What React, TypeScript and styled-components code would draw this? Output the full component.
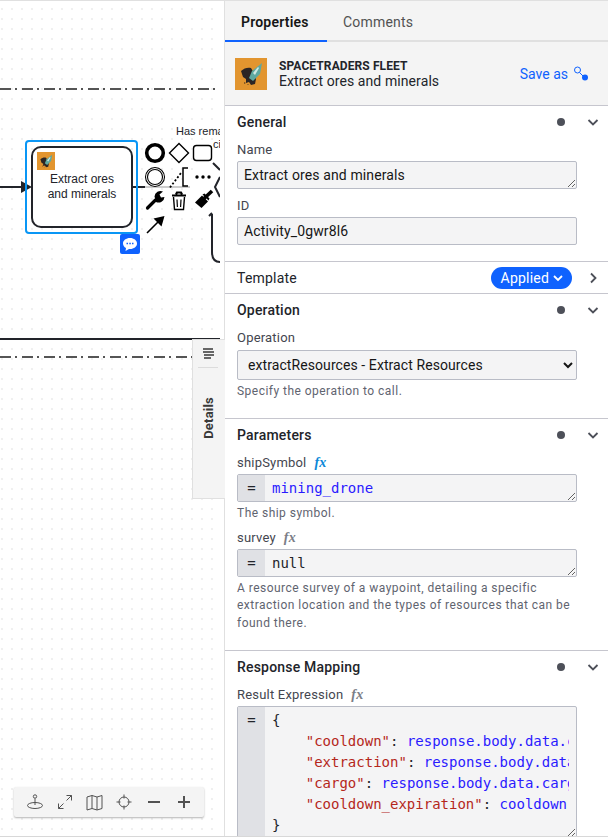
import * as React from 'react';
import styled, { createGlobalStyle } from 'styled-components';

const UI_FONT = '"Roboto", "Noto Sans", sans-serif';
const MONO_FONT = '"DejaVu Sans Mono", monospace';
const DIAGRAM_FONT = '"Liberation Sans", Arial, sans-serif';

const GlobalStyle = createGlobalStyle`
  html, body { margin: 0; padding: 0; height: 100%; background: #fff; overflow: hidden; }
  * { box-sizing: border-box; }
`;

const Workspace = styled.div`
  display: flex;
  height: 837px;
  border-top: 1px solid #e0e0e0;
  border-bottom: 1px solid #d8d8d8;
  font-family: ${UI_FONT};
  overflow: hidden;
`;

// Canvas
const CanvasArea = styled.div`
  position: relative;
  flex: 0 0 225px;
  border-right: 1px solid #e0e0e0;
  background: #fff;
`;

const DottedCanvas = styled.div`
  position: absolute;
  top: 0;
  bottom: 0;
  left: 0;
  width: 220px;
  overflow: hidden;
  background-image: radial-gradient(circle at 50% 50%, #bdbdbd 0.4px, transparent 0.8px);
  background-size: 10px 10px;
  background-position: -3px 3px;
`;

const FlowLayer = styled.svg`
  position: absolute;
  top: 0;
  left: 0;
`;

const SelectionOutline = styled.div`
  position: absolute;
  left: 25px;
  top: 139px;
  width: 113px;
  height: 94px;
  border: 2px solid #0a96f5;
  border-radius: 4px;
`;

const TaskShape = styled.div`
  position: absolute;
  left: 31px;
  top: 145px;
  width: 102px;
  height: 82px;
  padding: 24px 6px 0;
  background: #fff;
  border: 2.5px solid #22242a;
  border-radius: 10px;
  color: #22242a;
  font: 12px/15px ${DIAGRAM_FONT};
  text-align: center;
`;

const TaskIcon = styled.div`
  position: absolute;
  left: 37px;
  top: 151px;
  width: 18px;
  height: 18px;
`;

const CommentBadge = styled.div`
  position: absolute;
  left: 120px;
  top: 233px;
  width: 20px;
  height: 20px;
  display: flex;
  align-items: center;
  justify-content: center;
  background: #0f62fe;
  border-radius: 2px;
`;

const FloatingLabel = styled.div<{ $x: number; $y: number }>`
  position: absolute;
  left: ${(p) => p.$x}px;
  top: ${(p) => p.$y}px;
  color: #22242a;
  font: 11px/13px ${DIAGRAM_FONT};
  white-space: nowrap;
`;

const PadIcon = styled.svg<{ $x: number; $y: number }>`
  position: absolute;
  left: ${(p) => p.$x}px;
  top: ${(p) => p.$y}px;
`;

const DetailsTab = styled.div`
  position: absolute;
  left: 192px;
  top: 338px;
  width: 33px;
  height: 160px;
  display: flex;
  flex-direction: column;
  align-items: center;
  padding: 8px 2px 0 0;
  background: #f4f4f4;
  border: 1px solid #e0e0e0;
  border-right: none;
`;

const DetailsRule = styled.div`
  width: 20px;
  height: 1px;
  margin: 8px 0 29px;
  background: #dcdcdc;
`;

const DetailsLabel = styled.div`
  writing-mode: vertical-rl;
  transform: rotate(180deg);
  color: #393939;
  font-size: 13px;
  font-weight: 700;
  letter-spacing: 0.2px;
`;

const CanvasToolbar = styled.div`
  position: absolute;
  left: 14px;
  top: 786px;
  width: 190px;
  height: 30px;
  display: flex;
  align-items: center;
  padding: 0 6px;
  background: #f4f4f4;
  border-radius: 2px;
  box-shadow: 0 1px 2px rgba(0, 0, 0, 0.3);
`;

const ToolbarButton = styled.div`
  flex: 0 0 29.8px;
  height: 30px;
  display: flex;
  align-items: center;
  justify-content: center;
  color: #525252;
`;

// Properties panel
const Panel = styled.div`
  flex: 1;
  min-width: 0;
  overflow: hidden;
  background: #fff;
`;

const TabBar = styled.div`
  display: flex;
  height: 41px;
  background: #f4f4f4;
`;

const Tab = styled.div<{ $active?: boolean; $filler?: boolean }>`
  flex: ${(p) => (p.$filler ? '1' : '0 0 102px')};
  padding: 13px 0 0 16px;
  border-bottom: 2px solid ${(p) => (p.$active ? '#0f62fe' : '#e0e0e0')};
  color: ${(p) => (p.$active ? '#161616' : '#525252')};
  font-size: 14px;
  font-weight: ${(p) => (p.$active ? 600 : 400)};
  line-height: 16px;
  letter-spacing: 0.2px;
`;

const ElementHeader = styled.div`
  display: flex;
  align-items: center;
  height: 64px;
  padding: 0 19px 0 10px;
  background: #f4f4f4;
  border-bottom: 1px solid #c6c6ce;
`;

const ElementIcon = styled.div`
  width: 32px;
  height: 32px;
  flex: none;
`;

const ElementText = styled.div`
  flex: 1;
  margin-left: 12px;
  color: #22242a;
`;

const ElementType = styled.div`
  font-size: 12px;
  font-weight: 700;
  line-height: 14px;
  letter-spacing: 0.1px;
`;

const ElementName = styled.div`
  padding-top: 1px;
  font-size: 14px;
  line-height: 15px;
  letter-spacing: 0.09px;
`;

const SaveAs = styled.div`
  display: flex;
  align-items: center;
  gap: 5px;
  color: #0f62fe;
  font-size: 14px;
`;

const Group = styled.section<{ $height: number }>`
  height: ${(p) => p.$height}px;
  padding: 0 31px 0 12px;
  border-bottom: 1px solid #c6c6ce;
  overflow: hidden;
`;

const GroupHeader = styled.div`
  display: flex;
  align-items: center;
  height: 32px;
  margin-right: -24px;
`;

const GroupTitle = styled.div<{ $plain?: boolean }>`
  flex: 1;
  color: #22242a;
  font-size: 14px;
  font-weight: ${(p) => (p.$plain ? 400 : 500)};
  letter-spacing: 0.2px;
`;

const StatusDot = styled.span`
  width: 8px;
  height: 8px;
  margin-right: 20px;
  border-radius: 50%;
  background: #4d5059;
`;

const Chevron = styled.svg`
  flex: none;
  color: #4d5059;
`;

const AppliedPill = styled.div`
  display: flex;
  align-items: center;
  gap: 4px;
  height: 22px;
  margin-right: 13px;
  padding: 0 9px 0 10px;
  border-radius: 11px;
  background: #0f62fe;
  color: #fff;
  font-size: 14px;
  letter-spacing: 0.2px;
`;

const Field = styled.div<{ $top: number }>`
  margin-top: ${(p) => p.$top}px;
`;

const FieldLabel = styled.div<{ $raised?: boolean }>`
  display: flex;
  align-items: center;
  gap: 8px;
  height: 18px;
  padding-top: ${(p) => (p.$raised ? 0 : 2)}px;
  margin-bottom: 3px;
  color: #44464f;
  font-size: 13px;
  line-height: 18px;
  letter-spacing: 0.2px;
`;

const FxMark = styled.span<{ $active?: boolean }>`
  color: ${(p) => (p.$active ? '#0b87d8' : '#7b7e87')};
  font: italic 700 14px/14px "Liberation Serif", serif;
`;

const TextBox = styled.div<{ $resizable?: boolean }>`
  width: 340px;
  height: 28px;
  padding: 0 6px;
  overflow: hidden;
  resize: ${(p) => (p.$resizable ? 'vertical' : 'none')};
  background: #f4f4f5;
  border: 1px solid #b9bcc6;
  border-radius: 2px;
  color: #161616;
  font-size: 14px;
  line-height: 26px;
  letter-spacing: 0.12px;
  white-space: nowrap;
`;

const OperationSelect = styled.select`
  display: block;
  width: 340px;
  height: 30px;
  padding: 0 6px;
  background: #f4f4f5;
  border: 1px solid #b9bcc6;
  border-radius: 2px;
  color: #161616;
  font: 14px ${UI_FONT};
  letter-spacing: 0.08px;
`;

const HelpText = styled.div`
  margin-top: 3px;
  color: #5f6470;
  font-size: 12px;
  line-height: 17.5px;
  letter-spacing: 0.47px;
`;

const FeelBox = styled.div<{ $height: number }>`
  display: flex;
  width: 340px;
  height: ${(p) => p.$height}px;
  overflow: hidden;
  resize: vertical;
  background: #f4f4f5;
  border: 1px solid #b9bcc6;
  border-radius: 2px;
`;

const FeelGutter = styled.div`
  flex: 0 0 27px;
  padding-top: 5px;
  background: #e0e1e5;
  color: #22242a;
  font: 14px/17px ${MONO_FONT};
  text-align: center;
`;

const FeelCode = styled.pre`
  flex: 1;
  min-width: 0;
  margin: 0 7px 0 0;
  padding: 3px 0 0 7px;
  overflow: hidden;
  color: #22242a;
  font: 14px/21px ${MONO_FONT};
`;

const FeelValue = styled.span`
  color: #2a1aff;
`;

const FeelString = styled.span`
  color: #b5271b;
`;

const rocket = (size: number) => (
  <svg width={size} height={size} viewBox="0 0 32 32">
    <rect width="32" height="32" fill="#e2952f" />
    <path d="M6 13c3-3 7-4 10-3l3 5 2 6-1 5-4 1-2-3-3 1 0-4-3-2z" fill="#2b2524" />
    <path d="M14 20l3-7 10-8-2 11-7 7z" fill="#5ea8a0" />
    <path d="M18 15l5-6 1 1-4 7z" fill="#cfe8e3" />
    <path d="M9 24l2 1-2 1zM13 26l1 1-2 0z" fill="#6b4a20" />
  </svg>
);

const chevronDown = (
  <Chevron width="16" height="16" viewBox="0 0 16 16">
    <path d="M3.5 6l4.5 4.500L12.500 6" fill="none" stroke="currentColor" strokeWidth="1.800" />
  </Chevron>
);

const chevronRight = (
  <Chevron width="16" height="16" viewBox="0 0 16 16">
    <path d="M6 3.500L10.500 8 6 12.500" fill="none" stroke="currentColor" strokeWidth="1.800" />
  </Chevron>
);

function Canvas() {
  return (
    <CanvasArea>
      <DottedCanvas>
        <FlowLayer width="220" height="837" viewBox="0 0 220 837">
          <path d="M0 88h220M0 356h192" stroke="#555" strokeWidth="2" strokeDasharray="11 4 2 5" />
          <path d="M0 338h220" stroke="#22242a" strokeWidth="2" />
          <path d="M0 186h24" stroke="#22242a" strokeWidth="2" />
          <path d="M21 180l11 6-11 6z" fill="#22242a" />
          <path d="M133 186h12" stroke="#22242a" strokeWidth="2" />
          <path d="M145 186h45" stroke="#999" strokeWidth="1" />
          <path d="M212 205v46q0 10 8 10" fill="none" stroke="#22242a" strokeWidth="2" />
          <path d="M190 178l13-15h10l7 8v36l-7 6h-11l-12-12z" fill="#fff" />
          <path d="M213 162l7 7M220 176l-5 10 5 10M212 212l-3 3" fill="none" stroke="#22242a" strokeWidth="2" />
        </FlowLayer>

        <SelectionOutline />
        <TaskShape>Extract ores and minerals</TaskShape>
        <TaskIcon>{rocket(18)}</TaskIcon>
        <CommentBadge>
          <svg width="16" height="15" viewBox="0 0 16 15">
            <path d="M8 1c4 0 7 2.400 7 5.500S12 12 8 12l-1 0-3.500 2 .5-3C2 10 1 8.400 1 6.500 1 3.400 4 1 8 1z" fill="#fff" />
            <path d="M4.500 6.500h1.500M7.300 6.500h1.500M10 6.500h1.500" stroke="#0f62fe" strokeWidth="1.500" />
          </svg>
        </CommentBadge>

        <FloatingLabel $x={176} $y={124}>Has rema</FloatingLabel>
        <FloatingLabel $x={213} $y={137}>ci</FloatingLabel>

        <PadIcon $x={144} $y={141} width="22" height="22" viewBox="0 0 22 22">
          <circle cx="11" cy="11" r="8.300" fill="#fff" stroke="#000" strokeWidth="3.600" />
        </PadIcon>
        <PadIcon $x={168} $y={141} width="22" height="22" viewBox="0 0 22 22">
          <path d="M11 1.500L20.500 11 11 20.500 1.500 11z" fill="#fff" stroke="#000" strokeWidth="1.400" />
        </PadIcon>
        <PadIcon $x={192} $y={143} width="22" height="19" viewBox="0 0 22 19">
          <rect x="1.500" y="1.500" width="18" height="15" rx="3" fill="#fff" stroke="#000" strokeWidth="1.400" />
        </PadIcon>
        <PadIcon $x={144} $y={165} width="22" height="22" viewBox="0 0 22 22">
          <circle cx="11" cy="11" r="9.500" fill="#fff" stroke="#000" strokeWidth="1.100" />
          <circle cx="11" cy="11" r="7.500" fill="#fff" stroke="#000" strokeWidth="1.100" />
        </PadIcon>
        <PadIcon $x={168} $y={165} width="22" height="22" viewBox="0 0 22 22">
          <path d="M2 21.500L13 7" stroke="#000" strokeWidth="1.800" strokeDasharray="2 2" />
          <path d="M20 2h-5v18h5" fill="none" stroke="#000" strokeWidth="1.500" />
        </PadIcon>
        <PadIcon $x={144} $y={188} width="22" height="22" viewBox="0 0 22 22">
          <path d="M3.500 19l8-8" stroke="#000" strokeWidth="3.200" strokeLinecap="round" />
          <path d="M10.500 7.500a6 6 0 0 1 8.500-5l-3.500 3 1.500 3 3.500-.5a6 6 0 0 1-8.500 5z" fill="#000" />
        </PadIcon>
        <PadIcon $x={170} $y={190} width="18" height="20" viewBox="0 0 18 20">
          <path d="M2 4.500h14M6 3.500l1-2h4l1 2" fill="none" stroke="#000" strokeWidth="2.200" />
          <path d="M3.500 6l1 12.500h9l1-12.500" fill="#fff" stroke="#000" strokeWidth="1.400" />
          <path d="M7 8.500l.4 7.500M11 8.500l-.4 7.500" stroke="#000" strokeWidth="1.200" />
        </PadIcon>
        <PadIcon $x={193} $y={164} width="22" height="22" viewBox="0 0 22 22">
          <circle cx="4" cy="12" r="1.700" fill="#000" />
          <circle cx="10" cy="12" r="1.700" fill="#000" />
          <circle cx="16" cy="12" r="1.700" fill="#000" />
        </PadIcon>
        <PadIcon $x={193} $y={188} width="22" height="22" viewBox="0 0 22 22">
          <path d="M2 13.500L9 6.500l6 6L8.500 19z" fill="#000" />
          <path d="M11 9.500L19 2" stroke="#000" strokeWidth="3.600" />
          <path d="M9.500 5.500l2-1 5 5-1 2z" fill="#000" />
        </PadIcon>
        <PadIcon $x={145} $y={213} width="21" height="21" viewBox="0 0 21 21">
          <path d="M2 19L13.500 7.500" stroke="#000" strokeWidth="1.600" />
          <path d="M19.500 2l-3 10.500-8-8z" fill="#000" />
        </PadIcon>
      </DottedCanvas>

      <DetailsTab>
        <svg width="14" height="11" viewBox="0 0 14 11">
          <path d="M2 1h10M2 4h11M3 7h10M3 10h7" stroke="#393939" strokeWidth="1.600" />
        </svg>
        <DetailsRule />
        <DetailsLabel>Details</DetailsLabel>
      </DetailsTab>

      <CanvasToolbar>
        <ToolbarButton>
          <svg width="18" height="18" viewBox="0 0 18 18" fill="none" stroke="currentColor" strokeWidth="1">
            <circle cx="9" cy="3.500" r="1.700" />
            <path d="M9 5.500v6.500" />
            <ellipse cx="9" cy="12.500" rx="7.500" ry="3" />
          </svg>
        </ToolbarButton>
        <ToolbarButton>
          <svg width="16" height="16" viewBox="0 0 16 16" fill="none" stroke="currentColor" strokeWidth="1">
            <path d="M1.500 14.500L6.500 9.500M1.500 9.500v5h5M14.500 1.500L9.500 6.500M9.500 1.500h5v5" />
          </svg>
        </ToolbarButton>
        <ToolbarButton>
          <svg width="17" height="17" viewBox="0 0 17 17" fill="none" stroke="currentColor" strokeWidth="1">
            <path d="M1 3l5-1.500 5 1.500 5-1.500v13L11 16l-5-1.500L1 16zM6 1.500v13M11 3v13" />
          </svg>
        </ToolbarButton>
        <ToolbarButton>
          <svg width="16" height="16" viewBox="0 0 16 16" fill="none" stroke="currentColor" strokeWidth="1">
            <circle cx="8" cy="8" r="5" />
            <path d="M8 0.500v4M8 11.500v4M0.500 8h4M11.500 8h4" />
          </svg>
        </ToolbarButton>
        <ToolbarButton>
          <svg width="14" height="14" viewBox="0 0 14 14">
            <path d="M1 7h12" stroke="currentColor" strokeWidth="2" />
          </svg>
        </ToolbarButton>
        <ToolbarButton>
          <svg width="14" height="14" viewBox="0 0 14 14">
            <path d="M1 7h12M7 1v12" stroke="currentColor" strokeWidth="2" />
          </svg>
        </ToolbarButton>
      </CanvasToolbar>
    </CanvasArea>
  );
}

function PropertiesPanel() {
  return (
    <Panel>
      <TabBar>
        <Tab $active>Properties</Tab>
        <Tab>Comments</Tab>
        <Tab $filler />
      </TabBar>

      <ElementHeader>
        <ElementIcon>{rocket(32)}</ElementIcon>
        <ElementText>
          <ElementType>SPACETRADERS FLEET</ElementType>
          <ElementName>Extract ores and minerals</ElementName>
        </ElementText>
        <SaveAs>
          Save as
          <svg width="16" height="16" viewBox="0 0 16 16">
            <circle cx="4.500" cy="4" r="3" fill="none" stroke="#0f62fe" strokeWidth="1" />
            <path d="M6.500 6.500L10 10" stroke="#0f62fe" strokeWidth="1" />
            <circle cx="12" cy="11.500" r="3" fill="#0f62fe" />
          </svg>
        </SaveAs>
      </ElementHeader>

      <Group $height={156}>
        <GroupHeader>
          <GroupTitle>General</GroupTitle>
          <StatusDot />
          {chevronDown}
        </GroupHeader>
        <Field $top={2}>
          <FieldLabel>Name</FieldLabel>
          <TextBox $resizable>Extract ores and minerals</TextBox>
        </Field>
        <Field $top={7}>
          <FieldLabel>ID</FieldLabel>
          <TextBox>Activity_0gwr8l6</TextBox>
        </Field>
      </Group>

      <Group $height={32}>
        <GroupHeader>
          <GroupTitle $plain>Template</GroupTitle>
          <AppliedPill>
            Applied
            <svg width="10" height="10" viewBox="0 0 10 10">
              <path d="M1 3l4 4 4-4" fill="none" stroke="#fff" strokeWidth="1.800" />
            </svg>
          </AppliedPill>
          {chevronRight}
        </GroupHeader>
      </Group>

      <Group $height={125}>
        <GroupHeader>
          <GroupTitle>Operation</GroupTitle>
          <StatusDot />
          {chevronDown}
        </GroupHeader>
        <Field $top={3}>
          <FieldLabel $raised>Operation</FieldLabel>
          <OperationSelect defaultValue="extractResources">
            <option value="extractResources">extractResources - Extract Resources</option>
          </OperationSelect>
          <HelpText>Specify the operation to call.</HelpText>
        </Field>
      </Group>

      <Group $height={232}>
        <GroupHeader>
          <GroupTitle>Parameters</GroupTitle>
          <StatusDot />
          {chevronDown}
        </GroupHeader>
        <Field $top={2}>
          <FieldLabel>
            shipSymbol <FxMark $active>fx</FxMark>
          </FieldLabel>
          <FeelBox $height={28}>
            <FeelGutter>=</FeelGutter>
            <FeelCode><FeelValue>mining_drone</FeelValue></FeelCode>
          </FeelBox>
          <HelpText>The ship symbol.</HelpText>
        </Field>
        <Field $top={5}>
          <FieldLabel>
            survey <FxMark>fx</FxMark>
          </FieldLabel>
          <FeelBox $height={28}>
            <FeelGutter>=</FeelGutter>
            <FeelCode>null</FeelCode>
          </FeelBox>
          <HelpText>
            A resource survey of a waypoint, detailing a specific extraction location and the types of
            resources that can be found there.
          </HelpText>
        </Field>
      </Group>

      <Group $height={190}>
        <GroupHeader>
          <GroupTitle>Response Mapping</GroupTitle>
          <StatusDot />
          {chevronDown}
        </GroupHeader>
        <Field $top={2}>
          <FieldLabel>
            Result Expression <FxMark>fx</FxMark>
          </FieldLabel>
          <FeelBox $height={132}>
            <FeelGutter>=</FeelGutter>
            <FeelCode>
              {'{\n    '}
              <FeelString>"cooldown"</FeelString>: <FeelValue>response.body.data.c</FeelValue>
              {'\n    '}
              <FeelString>"extraction"</FeelString>: <FeelValue>response.body.data</FeelValue>
              {'\n    '}
              <FeelString>"cargo"</FeelString>: <FeelValue>response.body.data.carg</FeelValue>
              {'\n    '}
              <FeelString>"cooldown_expiration"</FeelString>: <FeelValue>cooldown</FeelValue>
              {'\n}'}
            </FeelCode>
          </FeelBox>
        </Field>
      </Group>
    </Panel>
  );
}

export default function App() {
  return (
    <>
      <GlobalStyle />
      <Workspace>
        <Canvas />
        <PropertiesPanel />
      </Workspace>
    </>
  );
}
